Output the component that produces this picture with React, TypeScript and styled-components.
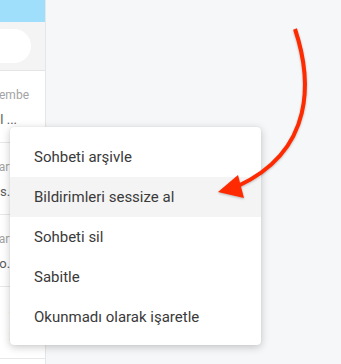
import React from 'react'
import styled, { createGlobalStyle } from 'styled-components'

const GlobalStyle = createGlobalStyle`
  html, body {
    margin: 0;
    padding: 0;
    background: #f6f7f9;
  }
  body {
    font-family: Roboto, "Liberation Sans", Arial, sans-serif;
  }
`

const Page = styled.div`
  position: relative;
  width: 341px;
  height: 364px;
  display: flex;
  overflow: hidden;
  background: #f6f7f9;
`

const Sidebar = styled.div`
  width: 45px;
  flex-shrink: 0;
  display: flex;
  flex-direction: column;
  background: #ffffff;
  border-right: 1px solid #e6e6e6;
  overflow: hidden;
`

const TopBand = styled.div`
  height: 22px;
  background: #a0dffc;
`

const SearchArea = styled.div`
  height: 48px;
  display: flex;
  align-items: center;
  justify-content: flex-end;
  padding-right: 14px;
  background: #f4f4f4;
  border-bottom: 1px solid #e4e4e4;
`

const SearchPill = styled.div`
  width: 200px;
  height: 34px;
  flex-shrink: 0;
  border-radius: 17px;
  background: #ffffff;
`

const ChatRow = styled.div`
  height: 72px;
  display: flex;
  flex-direction: column;
  align-items: flex-end;
  border-bottom: 1px solid #e8e8e8;
  box-sizing: border-box;
  white-space: nowrap;
`

const DateText = styled.div`
  margin-top: 16px;
  padding-right: 16px;
  font-size: 12px;
  line-height: 16px;
  color: #a3a3a3;
`

const PreviewText = styled.div`
  margin-top: 8px;
  padding-right: 28px;
  font-size: 13px;
  line-height: 17px;
  color: #5c5c5c;
`

const Main = styled.div`
  flex: 1;
`

const Menu = styled.ul`
  position: absolute;
  left: 10px;
  top: 127px;
  width: 251px;
  margin: 0;
  padding: 10px 0 8px;
  list-style: none;
  background: #ffffff;
  border-radius: 4px;
  box-shadow: 0 2px 8px rgba(0, 0, 0, 0.22), 0 0 1px rgba(0, 0, 0, 0.12);
  box-sizing: border-box;
`

const MenuItem = styled.li<{ $active?: boolean }>`
  height: 40px;
  display: flex;
  align-items: center;
  padding-left: 24px;
  font-size: 15px;
  color: #3a3a3a;
  background: ${(p) => (p.$active ? '#f4f4f4' : 'transparent')};
`

const ArrowSvg = styled.svg`
  position: absolute;
  left: 0;
  top: 0;
  pointer-events: none;
  filter: drop-shadow(0 1px 1px rgba(0, 0, 0, 0.25));
`

const chats = [
  { date: 'Perşembe', preview: 'Yarın görüşürüz, iyi akşamlar yazal ...' },
  { date: 'Pazartesi', preview: 'Tamam, sunuma hazırız, tamamdır herkes...' },
  { date: 'Pazartesi', preview: 'Dosyayı gönderdim, bir kontrol et bence şunu o...' },
  { date: 'Salı', preview: ':)' },
]

const menuItems = [
  'Sohbeti arşivle',
  'Bildirimleri sessize al',
  'Sohbeti sil',
  'Sabitle',
  'Okunmadı olarak işaretle',
]

export default function App() {
  return (
    <Page>
      <GlobalStyle />
      <Sidebar>
        <TopBand />
        <SearchArea>
          <SearchPill />
        </SearchArea>
        {chats.map((c, i) => (
          <ChatRow key={i}>
            <DateText>{c.date}</DateText>
            <PreviewText>{c.preview}</PreviewText>
          </ChatRow>
        ))}
      </Sidebar>
      <Main />
      <Menu>
        {menuItems.map((label, i) => (
          <MenuItem key={label} $active={i === 1}>
            {label}
          </MenuItem>
        ))}
      </Menu>
      <ArrowSvg width="341" height="364" viewBox="0 0 341 364">
        <path
          d="M295 29 C312 80, 315 150, 238 186"
          fill="none"
          stroke="#ff2a00"
          strokeWidth="4"
        />
        <polygon points="218,192 238,175 244,198" fill="#ff2a00" />
      </ArrowSvg>
    </Page>
  )
}
